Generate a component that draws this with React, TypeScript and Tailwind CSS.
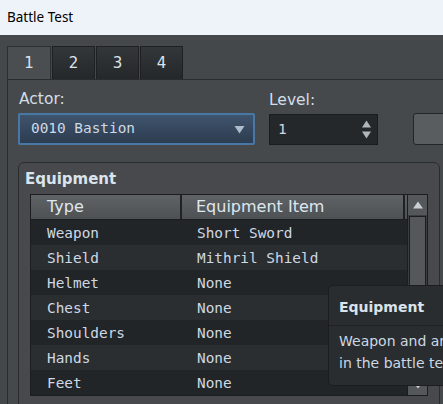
import React from "react";

const rows = [
  ["Weapon", "Short Sword"],
  ["Shield", "Mithril Shield"],
  ["Helmet", "None"],
  ["Chest", "None"],
  ["Shoulders", "None"],
  ["Hands", "None"],
  ["Feet", "None"],
];

const sans = { fontFamily: '"DejaVu Sans", sans-serif' };
const mono = { fontFamily: '"DejaVu Sans Mono", monospace' };

export default function App() {
  return (
    <div className="relative w-[443px] h-[404px] overflow-hidden flex flex-col bg-[#45484b] text-[#d3dde7]" style={sans}>
      {/* window title */}
      <div className="h-[35px] shrink-0 bg-[#eef2f9] flex items-center px-[7px] text-[13.5px] text-black" style={{ fontFamily: '"Noto Sans", sans-serif' }}>
        Battle Test
      </div>

      <div className="flex-1 flex flex-col pl-[7px] pt-[11px]">
        {/* tabs */}
        <div className="flex h-[33px] gap-px">
          <div className="w-[44px] border border-b-0 border-[#2c2f31] bg-[#4b4e51] flex items-center justify-center text-[15px] text-[#dbe3ec]">1</div>
          {["2", "3", "4"].map((t) => (
            <div key={t} className="w-[43px] border border-b-0 border-[#1e2022] bg-gradient-to-b from-[#34373a] to-[#25282b] flex items-center justify-center text-[15px] text-[#dbe3ec]">
              {t}
            </div>
          ))}
        </div>

        {/* panel */}
        <div className="flex-1 border-l border-t border-[#2a2d2f] bg-[#46494c] pl-[10px] pt-[9px]">
          <div className="flex items-end">
            <div className="flex flex-col w-[237px] shrink-0">
              <div className="h-[20px] leading-[20px] text-[15.5px] pl-px">Actor:</div>
              <div className="mt-[4px] h-[32px] rounded-[2px] border-2 border-[#4a78a6] bg-gradient-to-b from-[#3f546d] to-[#2d3d51] flex items-center pl-[11px] pr-[8px]">
                <span className="flex-1 text-[14.4px] text-[#cfd9e4]" style={mono}>0010 Bastion</span>
                <svg width="11" height="9" viewBox="0 0 11 9"><path d="M0.5 1h10L5.5 8.5z" fill="#aebccb" /></svg>
              </div>
            </div>
            <div className="flex flex-col w-[109px] ml-[14px] shrink-0">
              <div className="h-[20px] leading-[20px] text-[15.5px]">Level:</div>
              <div className="mt-[4px] h-[31px] border border-[#1a1c1e] bg-[#25282b] flex items-center pl-[8px] pr-[6px]">
                <span className="flex-1 text-[14.4px] text-[#cfd9e4]" style={mono}>1</span>
                <div className="flex flex-col gap-[3px]">
                  <svg width="9" height="8" viewBox="0 0 9 8"><path d="M0 7.5h9L4.5 0.5z" fill="#aeb6be" /></svg>
                  <svg width="9" height="8" viewBox="0 0 9 8"><path d="M0 0.5h9L4.5 7.5z" fill="#aeb6be" /></svg>
                </div>
              </div>
            </div>
            <div className="ml-[35px] w-[60px] shrink-0 h-[32px] rounded-[3px] border border-[#222426] bg-[#5a5d60]"></div>
          </div>

          {/* group box */}
          <div className="mt-[17px] w-[422px] h-[260px] rounded-[6px] border border-[#2a2d2f] bg-[#47494c] pl-[6px] pr-[10px] pt-[6px]">
            <div className="h-[20px] leading-[20px] text-[15px] font-bold text-[#dbe3ec]">Equipment</div>
            <div className="mt-[5px] ml-[5px] flex h-[202px]">
              <div className="w-[377px] border border-r-0 border-[#1b1d1f] bg-[#232629] flex flex-col">
                <div className="h-[25px] shrink-0 flex bg-gradient-to-b from-[#606366] to-[#4e5154] border-b border-[#1b1d1f]">
                  <div className="w-[151px] border-r-2 border-[#1f2123] pl-[16px] flex items-center text-[16px] text-[#dfe7ef]">Type</div>
                  <div className="flex-1 pl-[14px] flex items-center text-[16px] text-[#dfe7ef] mr-[2px] border-r-2 border-[#1f2123]">Equipment Item</div>
                </div>
                {rows.map(([a, b], i) => (
                  <div key={a} className={`h-[25px] shrink-0 flex items-center pt-[2px] text-[14.4px] text-[#cfd9e4] ${i % 2 ? "bg-[#2b2e31]" : "bg-[#222528]"}`} style={mono}>
                    <div className="w-[151px] pl-[16px]">{a}</div>
                    <div className="flex-1 pl-[15px]">{b}</div>
                  </div>
                ))}
              </div>
              {/* scrollbar */}
              <div className="w-[21px] border border-[#1b1d1f] bg-[#3b3e41] flex flex-col">
                <div className="h-[20px] bg-[#55585b] flex items-center justify-center">
                  <svg width="10" height="8" viewBox="0 0 10 8"><path d="M0 7.5h10L5 0.5z" fill="#c9cfd5" /></svg>
                </div>
                <div className="flex-1 px-px py-px">
                  <div className="h-full border border-[#1b1d1f] bg-[#55585b]"></div>
                </div>
                <div className="h-[18px] bg-[#55585b] flex items-center justify-center">
                  <svg width="8" height="6" viewBox="0 0 8 6"><path d="M0 0.5h8L4 5.5z" fill="#c9cfd5" /></svg>
                </div>
              </div>
            </div>
          </div>
        </div>
      </div>

      {/* tooltip */}
      <div className="absolute left-[328px] top-[285px] w-[140px] h-[101px] rounded-[5px] border border-[#1b1d1f] bg-[#2a2d30] flex flex-col">
        <div className="h-[40px] flex items-center pt-[4px] pl-[10px] text-[14px] font-bold text-[#dbe3ec] border-b border-[#1f2123]">Equipment</div>
        <div className="pl-[10px] pt-[4px] text-[14px] leading-[22px] text-[#cdd7e1] whitespace-nowrap">
          <div>Weapon and armor</div>
          <div>in the battle test</div>
        </div>
      </div>
    </div>
  );
}
